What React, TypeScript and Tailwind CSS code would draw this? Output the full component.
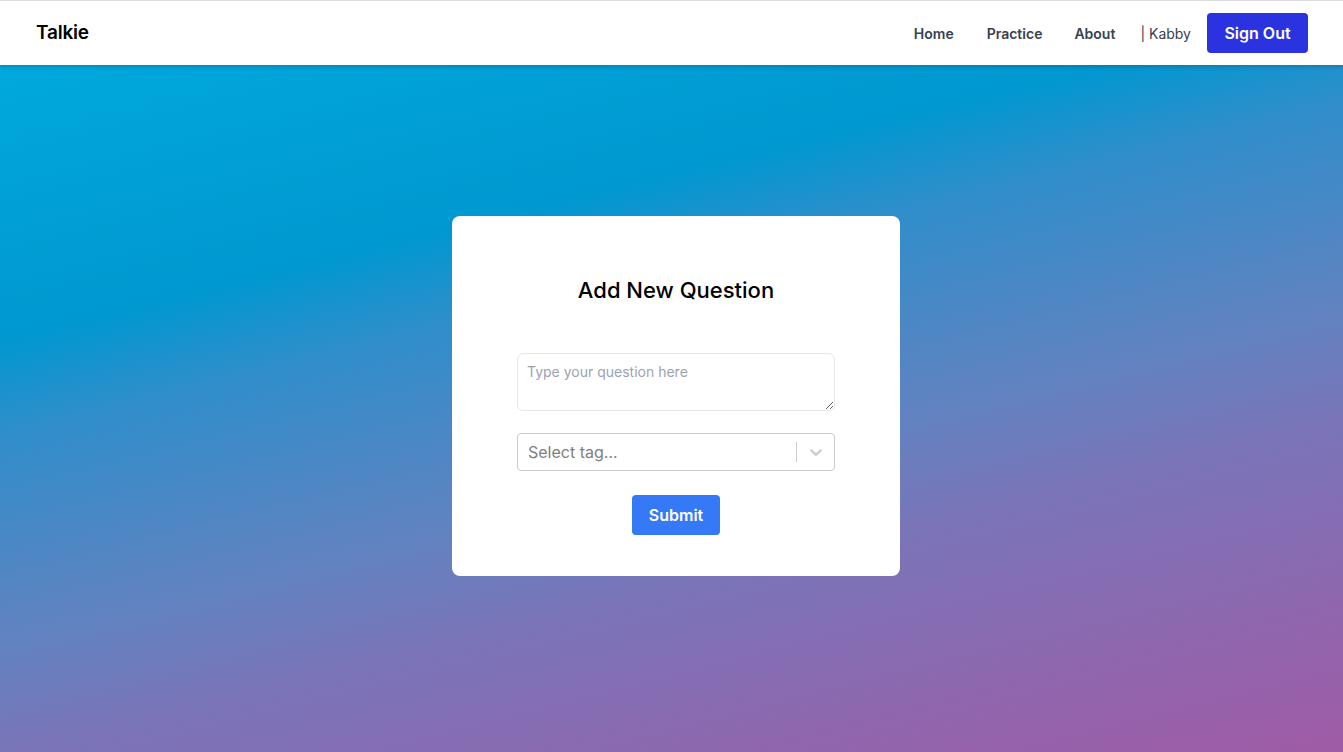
import type { ReactNode } from "react";

const FONT = { fontFamily: "Inter, 'Noto Sans', sans-serif" };

function NavBar(): ReactNode {
  return (
    <header className="relative z-10 flex h-[65px] items-center justify-between border-t border-[#dcdcdc] bg-white pl-9 pr-[35px] shadow-[0_2px_4px_rgba(0,0,0,0.18)]">
      <span className="text-[19px] font-semibold tracking-[-0.01em] text-black">Talkie</span>
      <nav className="flex items-center text-[14px] text-[#374151]">
        <a className="font-semibold">Home</a>
        <a className="ml-[33px] font-semibold">Practice</a>
        <a className="ml-[32px] font-semibold">About</a>
        <span className="ml-[25px]">| Kabby</span>
        <button className="ml-4 h-10 w-[101px] rounded-[4px] bg-[#2b33e1] text-[16px] font-semibold text-white">
          Sign Out
        </button>
      </nav>
    </header>
  );
}

function QuestionCard(): ReactNode {
  return (
    <div className="flex w-[448px] flex-col items-center rounded-lg bg-white px-[65px] pt-[58px] pb-[41px]">
      <h1 className="text-[22px] leading-8 font-medium text-black">Add New Question</h1>
      <textarea
        className="mt-[47px] h-[58px] w-[318px] rounded-md border border-[#e5e7eb] px-[9px] pt-[7px] text-[14px] text-gray-700 outline-none placeholder:text-[#9ca3af]"
        placeholder="Type your question here"
      />
      <div className="mt-[22px] flex h-[38px] w-[318px] items-center rounded-[4px] border border-[#cccccc] bg-white">
        <span className="flex-1 pl-[10px] text-[16px] text-[#808080]">Select tag...</span>
        <span className="h-[20px] w-px bg-[#cccccc]" />
        <span className="flex w-[37px] items-center justify-center text-[#cccccc]">
          <svg width="20" height="20" viewBox="0 0 20 20" fill="currentColor">
            <path d="M4.516 7.548c0.436-0.446 1.043-0.481 1.576 0l3.908 3.747 3.908-3.747c0.533-0.481 1.141-0.446 1.574 0 0.436 0.445 0.408 1.197 0 1.615-0.406 0.418-4.695 4.502-4.695 4.502-0.217 0.223-0.502 0.335-0.787 0.335s-0.57-0.112-0.789-0.335c0 0-4.287-4.084-4.695-4.502s-0.436-1.17 0-1.615z" />
          </svg>
        </span>
      </div>
      <button className="mt-6 h-10 w-[88px] rounded-[4px] bg-[#3579f6] text-[16px] font-semibold text-white">
        Submit
      </button>
    </div>
  );
}

export default function App(): ReactNode {
  return (
    <div className="flex min-h-screen flex-col" style={FONT}>
      <NavBar />
      <main className="flex h-[687px] justify-center bg-[linear-gradient(166deg,#00a9dc_0%,#0098d0_27%,#2f8ecb_36%,#6382c0_57%,#7b74b8_68%,#a05ba6_100%)] pt-[151px]">
        <div className="ml-[9px]">
          <QuestionCard />
        </div>
      </main>
    </div>
  );
}
